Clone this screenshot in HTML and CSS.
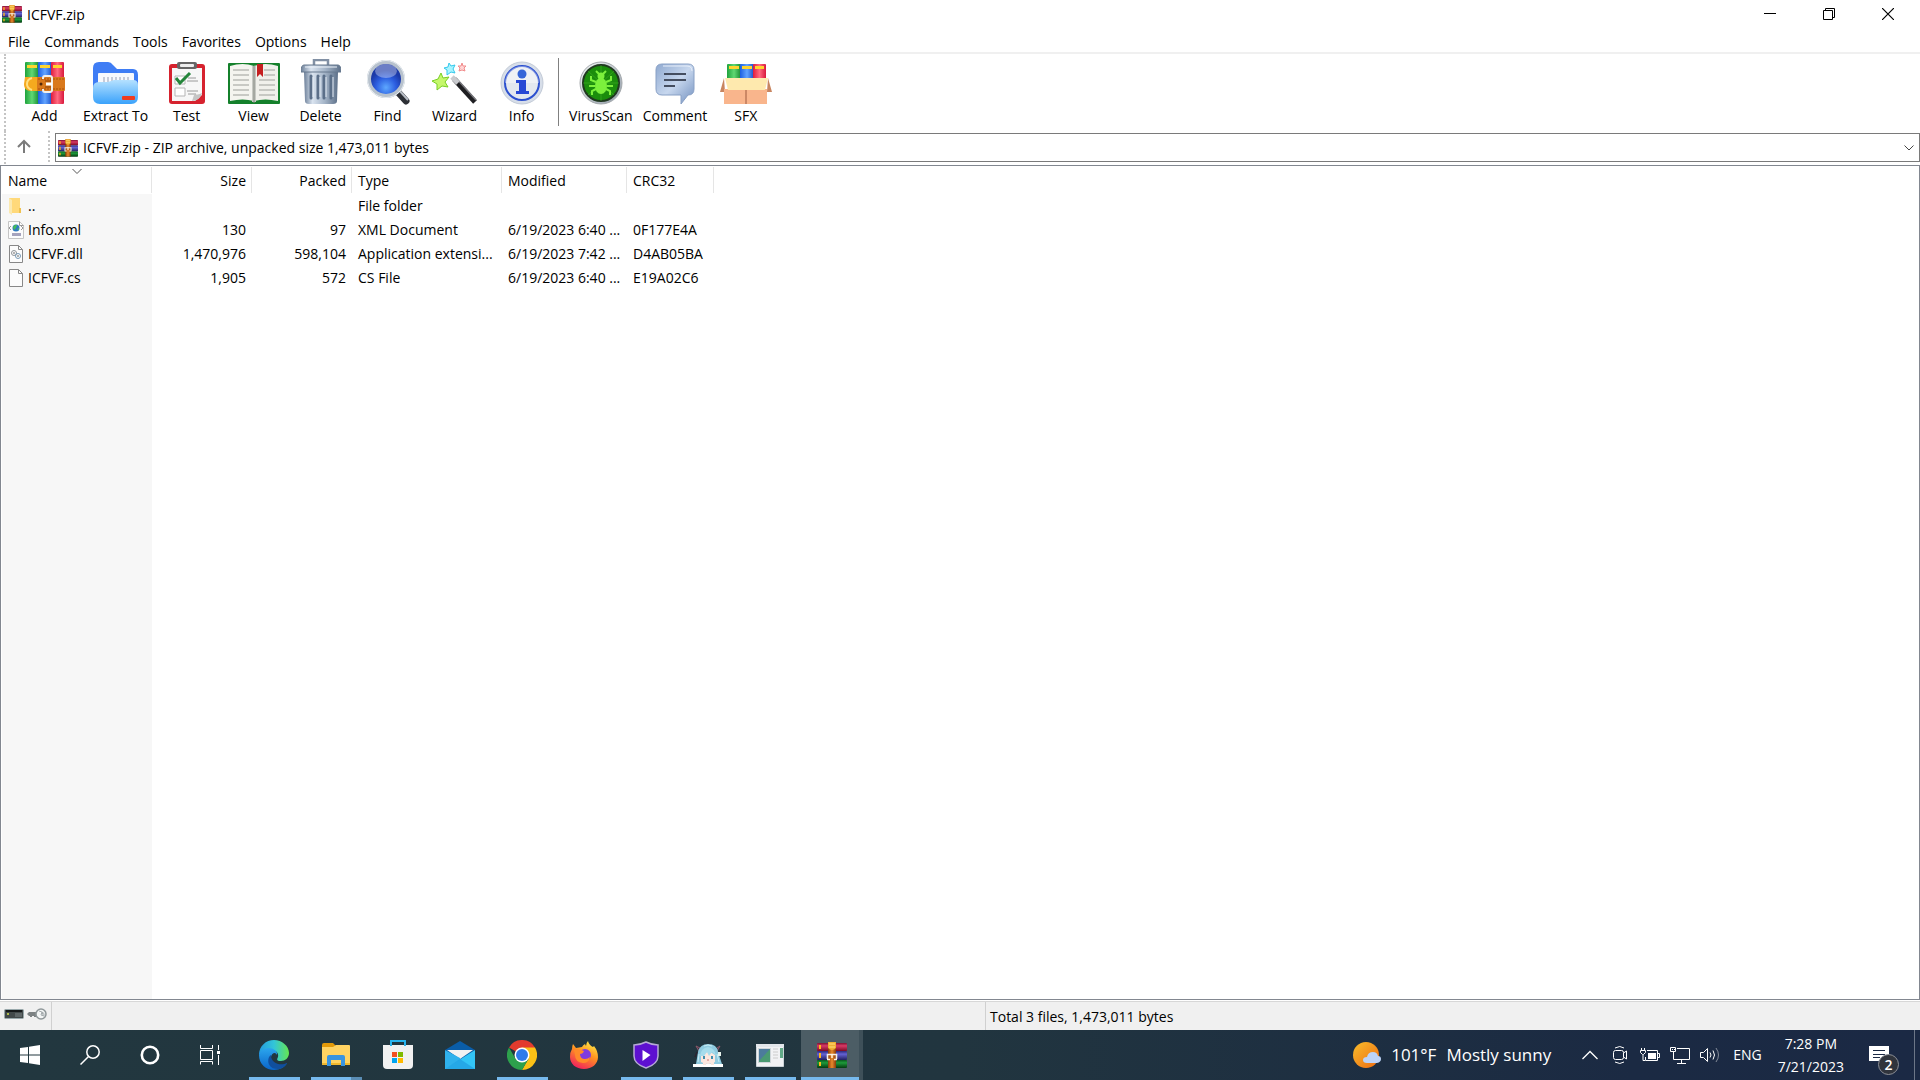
FILE: index.html
```html
<!DOCTYPE html>
<html lang="en">
<head>
    <meta charset="UTF-8">
    <meta name="viewport" content="width=device-width, initial-scale=1.0">
    <title>ICFVF.zip</title>
    <link rel="stylesheet" href="styles.css">
</head>
<body>
    <!-- Shared gradients and the archive icon -->
    <svg class="defs" aria-hidden="true">
        <defs>
            <linearGradient id="gRed" x2="0" y2="1"><stop offset="0" stop-color="#7e1232"/><stop offset=".35" stop-color="#d83a66"/><stop offset="1" stop-color="#7d0a25"/></linearGradient>
            <linearGradient id="gBlue" x2="0" y2="1"><stop offset="0" stop-color="#2b2a7c"/><stop offset=".35" stop-color="#6462d4"/><stop offset="1" stop-color="#211f60"/></linearGradient>
            <linearGradient id="gGreen" x2="0" y2="1"><stop offset="0" stop-color="#0a5a20"/><stop offset=".35" stop-color="#1e9a3a"/><stop offset="1" stop-color="#053a12"/></linearGradient>
            <linearGradient id="gStrap"><stop offset="0" stop-color="#8a3c08"/><stop offset=".5" stop-color="#e88a2c"/><stop offset="1" stop-color="#8a3a0a"/></linearGradient>
            <linearGradient id="vGreen"><stop offset="0" stop-color="#1fa23c"/><stop offset=".5" stop-color="#5fd873"/><stop offset="1" stop-color="#188a32"/></linearGradient>
            <linearGradient id="vBlue"><stop offset="0" stop-color="#1c5fe0"/><stop offset=".5" stop-color="#62a4ff"/><stop offset="1" stop-color="#1a50c8"/></linearGradient>
            <linearGradient id="vRed"><stop offset="0" stop-color="#e01c3c"/><stop offset=".5" stop-color="#ff6a80"/><stop offset="1" stop-color="#d8183c"/></linearGradient>
            <linearGradient id="gSilver" x2="1" y2="1"><stop offset="0" stop-color="#f4f6f8"/><stop offset="1" stop-color="#8f9aa6"/></linearGradient>
        </defs>
        <symbol id="rar" viewBox="0 0 30 26">
            <rect x="0" y="1" width="30" height="8" rx="1" fill="url(#gRed)"/>
            <rect x="0" y="9" width="30" height="9" rx="1" fill="url(#gBlue)"/>
            <rect x="0" y="18" width="30" height="8" rx="1" fill="url(#gGreen)"/>
            <path d="M2 3h2v4H2zM2 11h2v5H2zM2 20h2v4H2z" fill="#ffb81c"/>
            <rect x="11" y="0" width="8" height="26" fill="url(#gStrap)"/>
            <path d="M11 0h8v6q-4 4-8 0z" fill="#f0ae32"/>
            <path d="M12 2h6M12 5h6" stroke="#ffe07a"/>
            <path d="M10.500 17v-4.500h9V17" fill="none" stroke="#f4eee6" stroke-width="1.600"/>
            <path d="M10 17.500h3M17 17.500h3M15 12v4" stroke="#fff3e0" stroke-width="1.500"/>
        </symbol>
    </svg>

    <header class="titlebar">
        <svg class="app-icon"><use href="#rar"/></svg>
        <h1>ICFVF.zip</h1>
        <div class="window-buttons">
            <button aria-label="Minimize"><svg width="12" height="12"><path d="M0 5.500h12" stroke="#000"/></svg></button>
            <button aria-label="Restore"><svg width="12" height="12" fill="none" stroke="#000"><path d="M.5 2.500h9v9h-9zM2.500 2.500v-2h9v9h-2"/></svg></button>
            <button aria-label="Close"><svg width="12" height="12"><path d="M0 0l12 12M12 0L0 12" stroke="#000" stroke-width="1.200"/></svg></button>
        </div>
    </header>

    <nav class="menubar">
        <button>File</button>
        <button>Commands</button>
        <button>Tools</button>
        <button>Favorites</button>
        <button>Options</button>
        <button>Help</button>
    </nav>

    <div class="toolbar">
        <button class="tool">
            <svg width="42" height="44" viewBox="0 0 42 44">
                <rect x="1" y="1" width="14" height="42" rx="1" fill="url(#vGreen)"/>
                <rect x="14" y="1" width="14" height="42" rx="1" fill="url(#vBlue)"/>
                <rect x="27" y="1" width="13" height="42" rx="1" fill="url(#vRed)"/>
                <path d="M3 5.500h10M16 5.500h10M29 5.500h9" stroke="#ffd52e" stroke-width="3"/>
                <rect x="8" y="16" width="33" height="14" rx="1" fill="#d9791c"/>
                <path d="M8 18h32M8 28h32" stroke="#a9500a" stroke-dasharray="2 1"/>
                <path d="M1 16h12v14H7c-5 0-7-3-7-7z" fill="#f5a91f"/>
                <path d="M8 17c-4 1-5 3-5 6s2 5 5 6" fill="none" stroke="#ffdf82" stroke-width="2"/>
                <circle cx="17" cy="23" r="1.500" fill="#53280a"/>
                <path d="M19 18v-1q0-2 2-2h5q2 0 2 2v12q0 2-2 2h-5q-2 0-2-2v-1" fill="none" stroke="#f2eee9" stroke-width="2"/>
                <path d="M21 20h6M21 26h6" stroke="#8a4208"/>
                <path d="M22 23h6" stroke="#fff" stroke-width="3"/>
            </svg>
            <span>Add</span>
        </button>
        <button class="tool">
            <svg width="46" height="44" viewBox="0 0 46 44">
                <defs><linearGradient id="fold" x2="0" y2="1"><stop offset="0" stop-color="#b5e1ff"/><stop offset="1" stop-color="#3aa2fb"/></linearGradient></defs>
                <path d="M0 7q0-6 6-6h9q3 0 5 3l4 4h16q5 0 5 6v16H0z" fill="#3f7df5"/>
                <rect x="5" y="12" width="36" height="18" rx="1" fill="#f8f9fd"/>
                <path d="M11 16v5M15 16v5M19 16v5M23 16v5M27 16v5M31 16v5M35 16v5" stroke="#b6bccb" stroke-width="1.500"/>
                <path d="M0 27q0-6 6-6h9q3-1 6-2h19q5 0 5 5v12q0 7-7 7H7q-7 0-7-7z" fill="url(#fold)"/>
                <rect x="29" y="35" width="13" height="4" rx="1" fill="#ee3c20"/>
            </svg>
            <span>Extract To</span>
        </button>
        <button class="tool">
            <svg width="36" height="44" viewBox="0 0 36 44">
                <rect x="0" y="3" width="36" height="40" rx="3" fill="#d6222e"/>
                <path d="M3 7h30v27l-7 6H3z" fill="#f7f7f7"/>
                <path d="M33 32c-3 2-6 1-8 2l-2 6c5 0 9-3 10-8z" fill="#c5c5c5"/>
                <rect x="8" y="1" width="20" height="7" rx="2" fill="#666"/>
                <rect x="11" y="3" width="14" height="3" rx="1" fill="#eee"/>
                <path d="M6 15h10v8H6zM6 27h10v8H6z" fill="#fff" stroke="#b5b5b5"/>
                <path d="M7 17l4 5 10-10" fill="none" stroke="#24853a" stroke-width="3"/>
                <path d="M18 20h11M19 17h8M18 30h11M19 33h8" stroke="#9a9a9a"/>
            </svg>
            <span>Test</span>
        </button>
        <button class="tool">
            <svg width="52" height="44" viewBox="0 0 52 44">
                <rect x="0" y="2" width="52" height="41" rx="1" fill="#14802b"/>
                <path d="M2 5q13-4 24 0v35q-11-3-24 0z" fill="#f4f4ef"/>
                <path d="M26 5q11-4 24 0v35q-13-3-24 0z" fill="#f0f0eb"/>
                <path d="M24 5h4v36h-4z" fill="#c7c9c4"/>
                <path d="M26 5v37" stroke="#82867e"/>
                <path d="M5 9h16M5 14h16M5 19h16M5 24h16M5 29h16M5 34h16M36 9h11M36 14h11M31 19h16M31 24h16M31 29h16M31 34h16" stroke="#b9bbb7" stroke-width="1.500"/>
                <path d="M29 3h6v13l-3-3-3 3z" fill="#c51f20"/>
            </svg>
            <span>View</span>
        </button>
        <button class="tool">
            <svg width="40" height="46" viewBox="0 0 40 46">
                <defs><linearGradient id="bin"><stop offset="0" stop-color="#6d8099"/><stop offset=".25" stop-color="#d9e3ef"/><stop offset=".6" stop-color="#a6b6c9"/><stop offset="1" stop-color="#5d7089"/></linearGradient></defs>
                <path d="M13 6V1h14v5" fill="none" stroke="#8190a4" stroke-width="2.500"/>
                <path d="M3 13h34l-1 29q0 3-4 3H8q-4 0-4-3z" fill="url(#bin)"/>
                <path d="M10 17v22M17 17v22M23 17v22M30 17v22" stroke="#5b6f89" stroke-width="3" stroke-linecap="round"/>
                <path d="M12 18v20M19 18v20M25 18v20M32 18v20" stroke="#e3ebf4"/>
                <path d="M3 6h34q3 0 3 7H0q0-7 3-7z" fill="url(#bin)" stroke="#66788e"/>
                <path d="M4 8h32" stroke="#edf3fa"/>
            </svg>
            <span>Delete</span>
        </button>
        <button class="tool">
            <svg width="44" height="46" viewBox="0 0 44 46">
                <defs><radialGradient id="lens" cy=".75"><stop offset="0" stop-color="#5ea8ff"/><stop offset=".6" stop-color="#2b5cdf"/><stop offset="1" stop-color="#1c3aa8"/></radialGradient></defs>
                <path d="M31 32l9 10" stroke="#2d3036" stroke-width="7" stroke-linecap="round"/>
                <path d="M32 30l10 11" stroke="#b8bdc5" stroke-width="2"/>
                <circle cx="20" cy="20" r="17" fill="url(#lens)" stroke="#b8c2cd" stroke-width="4"/>
                <circle cx="20" cy="20" r="18.500" fill="none" stroke="#e8edf1"/>
                <ellipse cx="20" cy="12" rx="11" ry="7" fill="#fff" opacity=".35"/>
            </svg>
            <span>Find</span>
        </button>
        <button class="tool">
            <svg width="46" height="44" viewBox="0 0 46 44">
                <path d="M22 18l21 23" stroke="#1f1f22" stroke-width="5"/>
                <path d="M24 17l20 22" stroke="#77777c" stroke-width="1.500"/>
                <path d="M20 16l6 6" stroke="#c9cace" stroke-width="5"/>
                <path d="M9 12l2 5 6-1-4 5 3 5-6-1-5 4v-6l-5-3 6-2z" fill="#c5f76b" stroke="#79cf25"/>
                <path d="M17 2l2 3 4-1-2 4 2 4-4-1-4 3v-5l-3-2 4-1z" fill="#a9f4ff" stroke="#33c8ec"/>
                <path d="M30 2l1 3h3l-2 2 1 3-3-1-3 1 1-3-2-2h3z" fill="#ffd5d5" stroke="#f18c8c"/>
            </svg>
            <span>Wizard</span>
        </button>
        <button class="tool">
            <svg width="44" height="44" viewBox="0 0 44 44">
                <circle cx="22" cy="22" r="21" fill="#d7dee9" stroke="#c3cbd7"/>
                <circle cx="22" cy="22" r="17" fill="#e3e8ef" stroke="#2c50cf" stroke-width="2"/>
                <path d="M5 22a17 17 0 0 1 34 0z" fill="#fff" opacity=".4"/>
                <circle cx="22" cy="13" r="4.500" fill="#3565d8"/>
                <path d="M16 19h10v11h3v3H16v-3h3v-8h-3z" fill="#2748d5"/>
            </svg>
            <span>Info</span>
        </button>
        <div class="toolbar-separator"></div>
        <button class="tool">
            <svg width="44" height="44" viewBox="0 0 44 44">
                <circle cx="22" cy="22" r="21" fill="url(#gSilver)" stroke="#a4a9ac"/>
                <circle cx="22" cy="22" r="18" fill="#1b8d0c" stroke="#203a20" stroke-width="2"/>
                <path d="M22 4v36M4 22h36M9 10l26 24M9 34l26-24" stroke="#49b52d" opacity=".5"/>
                <ellipse cx="22" cy="25" rx="6" ry="8" fill="#7cf03c"/>
                <circle cx="22" cy="15" r="3.500" fill="#7cf03c"/>
                <path d="M17 21l-5-2v-4M27 21l5-2v-4M16 25h-6M28 25h6M17 28l-4 2v4M27 28l4 2v4M20 13l-3-3M24 13l3-3" fill="none" stroke="#7cf03c" stroke-width="2"/>
            </svg>
            <span>VirusScan</span>
        </button>
        <button class="tool">
            <svg width="40" height="42" viewBox="0 0 40 42">
                <defs><linearGradient id="talk" x2="1" y2="1"><stop offset="0" stop-color="#8fa9d0"/><stop offset=".5" stop-color="#c7d7ee"/><stop offset="1" stop-color="#7290bf"/></linearGradient></defs>
                <path d="M7 1h26q6 0 6 6v19q0 6-6 6l-7 9v-9H7q-6 0-6-6V7q0-6 6-6z" fill="url(#talk)" stroke="#88a0c5"/>
                <path d="M8 3h24q5 0 5 5" fill="none" stroke="#e8effa"/>
                <path d="M9 11h22M9 17h22M9 23h11" stroke="#454e60" stroke-width="2"/>
            </svg>
            <span>Comment</span>
        </button>
        <button class="tool">
            <svg width="52" height="42" viewBox="0 0 52 42">
                <rect x="7" y="1" width="14" height="18" rx="1" fill="url(#vGreen)"/>
                <rect x="20" y="1" width="14" height="18" rx="1" fill="url(#vBlue)"/>
                <rect x="33" y="1" width="13" height="18" rx="1" fill="url(#vRed)"/>
                <path d="M9 4.500h10M22 4.500h10M35 4.500h9" stroke="#ffd52e" stroke-width="3"/>
                <path d="M4 15l-4 14h5zM48 15l4 14h-5z" fill="#c88560"/>
                <path d="M4 26h43v15H4z" fill="#f9b58c"/>
                <path d="M5 15h43l-3 12H8z" fill="#fee9ae"/>
                <path d="M26 27v14" stroke="#9f5b3e"/>
            </svg>
            <span>SFX</span>
        </button>
    </div>

    <div class="address-row">
        <button class="up" aria-label="Up one level">
            <svg width="14" height="15" fill="none" stroke="#7b7b7b" stroke-width="2"><path d="M7 14V2M1 8l6-6 6 6"/></svg>
        </button>
        <div class="address">
            <svg class="app-icon"><use href="#rar"/></svg>
            <select aria-label="Archive path">
                <option>ICFVF.zip - ZIP archive, unpacked size 1,473,011 bytes</option>
            </select>
            <svg class="chevron" width="10" height="6" fill="none" stroke="#444"><path d="M.5.500L5 5 9.500.500"/></svg>
        </div>
    </div>

    <main class="file-list">
        <table>
            <colgroup>
                <col class="col-name">
                <col class="col-size">
                <col class="col-size">
                <col class="col-type">
                <col class="col-modified">
                <col class="col-crc">
            </colgroup>
            <thead>
                <tr>
                    <th>Name<svg class="sort-mark" width="10" height="5" fill="none" stroke="#555"><path d="M.5 0L5 4.500 9.500 0"/></svg></th>
                    <th class="number">Size</th>
                    <th class="number">Packed</th>
                    <th>Type</th>
                    <th>Modified</th>
                    <th>CRC32</th>
                </tr>
            </thead>
            <tbody>
                <tr>
                    <td>
                        <div class="file-name">
                            <svg width="16" height="18"><path d="M1 1h11v15H1z" fill="#ffd97a"/><path d="M1 1l3 2v15l-3-2z" fill="#fbe9b0"/><path d="M11 11h2v5h-2z" fill="#f0c250"/></svg>
                            <span>..</span>
                        </div>
                    </td>
                    <td></td>
                    <td></td>
                    <td>File folder</td>
                    <td></td>
                    <td></td>
                </tr>
                <tr>
                    <td>
                        <div class="file-name">
                            <svg width="16" height="18"><path d="M.5.500h11l4 4v13H.5z" fill="#fcfcfc" stroke="#c5c5c5"/><path d="M11.500.500v4h4" fill="none" stroke="#999"/><circle cx="8" cy="7" r="3.500" fill="#2f7bc0"/><path d="M5 6q2-3 4-2l-1 3-2 2zM9 8l2-1v2z" fill="#45bd57"/><path d="M3 5L1 7l2 2M13 5l2 2-2 2" fill="none" stroke="#999"/><path d="M4 13.500h9" stroke="#a5a3bd" stroke-width="3"/></svg>
                            <span>Info.xml</span>
                        </div>
                    </td>
                    <td class="number">130</td>
                    <td class="number">97</td>
                    <td>XML Document</td>
                    <td>6/19/2023 6:40 ...</td>
                    <td>0F177E4A</td>
                </tr>
                <tr>
                    <td>
                        <div class="file-name">
                            <svg width="16" height="18"><path d="M1.500.500h9l4 4v13h-13z" fill="#fcfcfc" stroke="#888"/><path d="M10.500.500v4h4" fill="none" stroke="#888"/><circle cx="6" cy="8" r="2.500" fill="none" stroke="#8f9498"/><circle cx="6" cy="8" r="1" fill="#999"/><circle cx="10" cy="11" r="2.500" fill="none" stroke="#7a9cb8"/><circle cx="10" cy="11" r="1" fill="#999"/></svg>
                            <span>ICFVF.dll</span>
                        </div>
                    </td>
                    <td class="number">1,470,976</td>
                    <td class="number">598,104</td>
                    <td>Application extensi...</td>
                    <td>6/19/2023 7:42 ...</td>
                    <td>D4AB05BA</td>
                </tr>
                <tr>
                    <td>
                        <div class="file-name">
                            <svg width="16" height="18"><path d="M1.500.500h9l4 4v13h-13z" fill="#fcfcfc" stroke="#888"/><path d="M10.500.500v4h4" fill="none" stroke="#888"/></svg>
                            <span>ICFVF.cs</span>
                        </div>
                    </td>
                    <td class="number">1,905</td>
                    <td class="number">572</td>
                    <td>CS File</td>
                    <td>6/19/2023 6:40 ...</td>
                    <td>E19A02C6</td>
                </tr>
            </tbody>
        </table>
    </main>

    <footer class="statusbar">
        <div class="status-icons">
            <svg width="20" height="12"><rect x=".5" y="1.500" width="19" height="9" rx="1" fill="#42494a" stroke="#98a8ab"/><path d="M2 3h16" stroke="#15191a" stroke-width="2"/><path d="M11 5h7v4h-7z" fill="#5e6667"/><circle cx="4" cy="6" r="1" fill="#d6e54d"/></svg>
            <svg width="20" height="12"><path d="M0 6l2-2h10v4H9v1H7V8H5v1H3V8H2z" fill="#7d8283"/><circle cx="14" cy="6" r="5" fill="#f3f5f5" stroke="#8e9698" stroke-width="1.500"/><path d="M12 3q4 0 4 4M15 4q3 1 2 4l-3-1z" fill="#fff" stroke="#a4abad"/></svg>
        </div>
        <div class="status-selected"></div>
        <div class="status-total">Total 3 files, 1,473,011 bytes</div>
    </footer>

    <div class="taskbar">
        <div class="system-buttons">
            <button aria-label="Start"><svg width="20" height="20" fill="#fff"><path d="M0 3l8-1v7.500H0zM9 1.800L20 0v9.500H9zM0 10.500h8V18l-8-1zM9 10.500h11V20L9 18.300z"/></svg></button>
            <button aria-label="Search"><svg width="20" height="20" fill="none" stroke="#fff" stroke-width="1.500"><circle cx="13" cy="7" r="6.200"/><path d="M8.500 11.500L.5 19.500"/></svg></button>
            <button aria-label="Cortana"><svg width="20" height="20" fill="none" stroke="#fff" stroke-width="2.600"><circle cx="10" cy="10" r="8.200"/></svg></button>
            <button aria-label="Task View"><svg width="20" height="20" fill="none" stroke="#fff"><path d="M.5 0v3.500h12V0M.5 5.500h12v9H.5zM.5 19.500v-3h12v3M18.500 0v5M18.500 10v10"/><path d="M17 6h3v3h-3z" fill="#fff" stroke="none"/></svg></button>
        </div>
        <div class="task-apps">
            <button class="open" aria-label="Microsoft Edge">
                <svg width="30" height="30" viewBox="0 0 30 30">
                    <defs>
                        <linearGradient id="edgeTop"><stop offset="0" stop-color="#249be0"/><stop offset=".5" stop-color="#32c5d8"/><stop offset="1" stop-color="#65e650"/></linearGradient>
                        <linearGradient id="edgeSide" x2="0" y2="1"><stop offset="0" stop-color="#2ba6ee"/><stop offset="1" stop-color="#0a64c8"/></linearGradient>
                    </defs>
                    <path d="M0 15C0 6 7 0 15 0s15 6 15 13c0 5-4 8-8 8-5 0-4-2-3-4 1-4-2-7-7-7C6 10 2 12 0 15z" fill="url(#edgeTop)"/>
                    <path d="M0 15c1-5 6-7 10-7s9 3 8 7c-1-3-5-3-6 2-1 6 5 9 9 9 3 0 5-1 7-3-2 4-7 7-13 7C7 30 0 24 0 15z" fill="url(#edgeSide)"/>
                    <path d="M12 15c-4 2-5 14 7 14 3 0 7-2 9-6-6 3-16 1-16-8z" fill="#104f9e"/>
                </svg>
            </button>
            <button class="open grouped" aria-label="File Explorer">
                <svg width="28" height="24" viewBox="0 0 28 24"><path d="M0 2q0-2 2-2h9l3 3-2 3H0z" fill="#e39a09"/><path d="M0 4h11l3-2h13q1 0 1 1v19H0z" fill="#ffd362"/><path d="M0 20h28v2H0z" fill="#f0b72d"/><path d="M5 23V14q0-2 2-2h14q2 0 2 2v9h-4v-6H9v6z" fill="#3994e0"/></svg>
            </button>
            <button aria-label="Microsoft Store">
                <svg width="30" height="30" viewBox="0 0 30 30"><path d="M0 5h30v20q0 4-4 4H4q-4 0-4-4z" fill="#f1f1f1"/><path d="M8 6V1h14v5" fill="none" stroke="#28b4ee" stroke-width="2"/><path d="M9 12h5v5H9z" fill="#f25022"/><path d="M15 12h5v5h-5z" fill="#7fba00"/><path d="M9 18h5v5H9z" fill="#00a4ef"/><path d="M15 18h5v5h-5z" fill="#ffb900"/></svg>
            </button>
            <button aria-label="Mail">
                <svg width="30" height="28" viewBox="0 0 30 28"><path d="M0 9L15 0l15 9-15 11z" fill="#0a5da8"/><path d="M2 9h26L15 18z" fill="#f2f2f2"/><path d="M0 9l15 8v11H0z" fill="#2fb1ec"/><path d="M30 9L0 28h30z" fill="#33c5f6"/><path d="M0 28l15-10 15 10z" fill="#1d95dd" opacity=".6"/></svg>
            </button>
            <button class="open" aria-label="Google Chrome">
                <svg width="30" height="30" viewBox="0 0 30 30"><path d="M15 15L2 7.500A15 15 0 0 1 28 7.500z" fill="#e33b2e"/><path d="M15 7.500h13A15 15 0 0 1 15 30l6.500-11.300z" fill="#fbc116"/><path d="M2 7.500l6.500 11.200 13 0L15 30A15 15 0 0 1 2 7.500z" fill="#2da14c"/><circle cx="15" cy="15" r="7.500" fill="#fff"/><circle cx="15" cy="15" r="6" fill="#2f7bea"/></svg>
            </button>
            <button aria-label="Firefox">
                <svg width="28" height="28" viewBox="0 0 28 28">
                    <defs><linearGradient id="fox" x1=".8" x2=".3" y2="1"><stop offset="0" stop-color="#fff04a"/><stop offset=".45" stop-color="#ff9320"/><stop offset="1" stop-color="#f0205e"/></linearGradient></defs>
                    <path d="M3 3l3 4 6-1q1-2 3-3l1 2q0-3 2-5 1 4 5 6l1-1q4 5 4 11c0 7-6 12-14 12S0 23 0 16q0-5 2-8 0-3 1-5z" fill="url(#fox)"/>
                    <circle cx="15" cy="14" r="6" fill="#7e3be0"/>
                    <path d="M4 9q5-2 10 1-1 3-4 3 0 5 5 5 3 0 5-2-1 6-7 6-8-1-8-8z" fill="#ff8a2a"/>
                </svg>
            </button>
            <button class="open" aria-label="Video player">
                <svg width="26" height="28" viewBox="0 0 26 28"><path d="M13 1q6 3 12 3v11q0 8-12 12Q1 23 1 15V4q6 0 12-3z" fill="#5d10d0" stroke="#b6a9d6" stroke-width="1.500"/><path d="M9.500 9l8 5-8 6z" fill="#fff"/></svg>
            </button>
            <button class="open" aria-label="Desktop pet">
                <svg width="30" height="26" viewBox="0 0 30 26">
                    <path d="M7 11L3 4l6 3M23 11l4-7-6 4" fill="#3d3145" stroke="#8b5a6a"/>
                    <path d="M3 22Q4 16 5 10 7 2 15 2q9 0 10 8l4 12z" fill="#8fcbe0"/>
                    <path d="M4 10l-2 5M26 9l2 4" stroke="#2b2430" stroke-width="1.500"/>
                    <path d="M8 13q7-6 14 0v7q-7 4-14 0z" fill="#fbe7df"/>
                    <path d="M7 14q1-8 8-9 7 1 8 9l-4-4-3 4-2-4-3 4z" fill="#a5dcec"/>
                    <path d="M11 4q4-2 8 0M6 12l-1 8M24 12l2 8" fill="none" stroke="#c9edf5"/>
                    <path d="M10 14h2v3h-2zM18 14h2v3h-2z" fill="#3f8fae"/>
                    <path d="M25 10h3v4h-3z" fill="#e6f3ec"/>
                    <path d="M0 22h30v3H0z" fill="#fff"/>
                    <path d="M10 20h3v3h-3zM18 20h3v3h-3z" fill="#fbe7df"/>
                    <path d="M14 18h2" stroke="#c77"/>
                </svg>
            </button>
            <button class="open" aria-label="Document viewer">
                <svg width="28" height="24" viewBox="0 0 28 24"><path d="M.5 1.500h27v22H.5z" fill="#f1f2f4" stroke="#cbd3d8"/><path d="M0 1h28v3H0z" fill="#e2e6ea"/><path d="M2 5h13v15H2z" fill="#cfd6da"/><path d="M3 6h11v13H3z" fill="#4a9a72"/><path d="M3 6h11L3 18z" fill="#4c7b9c"/><path d="M17 6h5M17 9h5M17 12h5M17 15h5" stroke="#ccc"/><path d="M24 5h3v10h-3z" fill="#62a987"/></svg>
            </button>
            <button class="open active" aria-label="WinRAR">
                <svg width="30" height="26"><use href="#rar"/></svg>
            </button>
        </div>
        <div class="tray">
            <button class="weather">
                <svg width="28" height="27" viewBox="0 0 28 27">
                    <defs><linearGradient id="sun" x2="1" y2="1"><stop offset="0" stop-color="#f9bd2b"/><stop offset="1" stop-color="#ee6b12"/></linearGradient></defs>
                    <circle cx="13" cy="13" r="13" fill="url(#sun)"/>
                    <path d="M14 21q-4 0-4-3t4-3q1-5 6-5 4 0 5 4 3 0 3 3t-4 4z" fill="#bdd3f7"/>
                </svg>
                <span>101°F</span>
                <span>Mostly sunny</span>
            </button>
            <button class="tray-icon" aria-label="Show hidden icons"><svg width="16" height="10" fill="none" stroke="#fff" stroke-width="1.300"><path d="M.5 9L8 1.500 15.500 9"/></svg></button>
            <button class="tray-icon" aria-label="Meet Now"><svg width="16" height="20" fill="none" stroke="#fff"><path d="M3 3q5-3 9 0M3 17q5 3 9 0M11.500 8l3-2v8l-3-2"/><rect x="1.500" y="5.500" width="10" height="9" rx="2"/></svg></button>
            <button class="tray-icon" aria-label="Battery"><svg width="20" height="14" fill="none" stroke="#fff"><path d="M7 2.500h10.500v10h-12V9M18 5.500h1.500v4H18M1.500 0v2M4.500 0v2M.5 2.500h5v2l-2 2h-1l-2-2zM3 7v5.500h2"/><path d="M8 5h8v6H8z" fill="#fff" stroke="none"/></svg></button>
            <button class="tray-icon" aria-label="Network"><svg width="20" height="17" fill="none" stroke="#fff"><path d="M7 1.500h12.500v11h-16V8M11.500 13v3M7 16.500h9M.5.500h5v4h-5zM3.500 5v3M2.500 2v1M4.500 2v1"/></svg></button>
            <button class="tray-icon" aria-label="Volume"><svg width="20" height="18" fill="none" stroke="#fff"><path d="M.5 6.500h3l4-4v13l-4-4h-3zM10 6.500q2 2.500 0 5M13 4.500q3 4.500 0 9"/><path d="M16 2q5 7 0 14" opacity=".45"/></svg></button>
            <button class="language">ENG</button>
            <button class="clock"><span>7:28 PM</span><span>7/21/2023</span></button>
            <button class="notifications" aria-label="2 new notifications">
                <svg width="20" height="19"><path d="M0 0h20v15h-7l-3 4v-4H0z" fill="#fff"/><path d="M4 4.500h12M4 8.500h12M4 11.500h7" stroke="#1c2a44"/></svg>
                <span class="badge">2</span>
            </button>
            <button class="show-desktop" aria-label="Show desktop"></button>
        </div>
    </div>
</body>
</html>
```

FILE: styles.css
```css
* {
    box-sizing: border-box;
}
body {
    margin: 0;
    height: 100vh;
    display: flex;
    flex-direction: column;
    font-family: "Open Sans", "Noto Sans", sans-serif;
    font-size: 14px;
    line-height: 20px;
    color: #000;
    background-color: #fff;
    overflow: hidden;
}
button {
    padding: 0;
    border: none;
    background: none;
    color: inherit;
    font: inherit;
    white-space: nowrap;
}
svg {
    display: block;
    flex-shrink: 0;
}
.defs {
    position: absolute;
    width: 0;
    height: 0;
}
.app-icon {
    width: 20px;
    height: 18px;
}

/* Title bar and menu */
.titlebar {
    display: flex;
    align-items: center;
    height: 28px;
    padding-left: 2px;
    gap: 5px;
}
.titlebar h1 {
    margin: 0;
    padding-top: 2px;
    flex: 1;
    font-size: 14px;
    font-weight: normal;
}
.window-buttons {
    display: flex;
    padding-right: 3px;
}
.window-buttons button {
    display: flex;
    align-items: center;
    justify-content: center;
    width: 59px;
    height: 28px;
}
.menubar {
    display: flex;
    gap: 14px;
    height: 26px;
    padding: 4px 8px 0;
    align-items: flex-start;
    border-bottom: 2px solid #f0f0f0;
}

/* Toolbar */
.toolbar {
    display: flex;
    height: 77px;
    margin-left: 4px;
    padding: 4px 0 0 5px;
    border-left: 2px dotted #c4c4c4;
}
.tool {
    display: flex;
    flex-direction: column;
    align-items: center;
    justify-content: flex-end;
    min-width: 67px;
    height: 68px;
    padding: 0 5px;
    gap: 1px;
}
.toolbar-separator {
    width: 1px;
    height: 68px;
    margin: 0 5px 0 3px;
    background-color: #808080;
}

/* Address bar */
.address-row {
    display: flex;
    height: 33px;
    margin-left: 4px;
    border-left: 2px dotted #c4c4c4;
    padding-bottom: 2px;
}
.up {
    display: flex;
    align-items: center;
    justify-content: center;
    width: 44px;
    padding-right: 6px;
    border-right: 2px dotted #c4c4c4;
}
.address {
    flex: 1;
    display: flex;
    align-items: center;
    height: 29px;
    margin: 2px 0 0 5px;
    padding: 0 5px 0 2px;
    gap: 5px;
    border: 1px solid #7a7a7a;
}
.address select {
    flex: 1;
    min-width: 0;
    padding: 0;
    border: none;
    background: none;
    appearance: none;
    color: inherit;
    font: inherit;
}
.chevron {
    pointer-events: none;
}

/* File list */
.file-list {
    flex: 1;
    min-height: 0;
    margin-top: 1px;
    border: 1px solid #828790;
    background: linear-gradient(#f7f7f7, #f7f7f7) no-repeat 1px 0 / 150px 100%;
}
.file-list table {
    width: 100%;
    table-layout: fixed;
    border-collapse: collapse;
}
.col-name {
    width: 151px;
}
.col-size {
    width: 100px;
}
.col-type {
    width: 150px;
}
.col-modified {
    width: 125px;
}
.col-crc {
    width: auto;
}
.file-list th,
.file-list td {
    height: 24px;
    padding: 0 0 0 6px;
    text-align: left;
    font-weight: normal;
    white-space: nowrap;
}
.file-list th {
    position: relative;
    height: 28px;
    padding-top: 2px;
    background: linear-gradient(#e5e5e5, #e5e5e5) no-repeat right 0 top 1px / 1px 26px #fff;
}
.file-list th:first-child {
    padding-left: 7px;
}
.file-list th:last-child {
    background-position: 86px 1px;
}
.file-list .number {
    padding-right: 6px;
    text-align: right;
}
.sort-mark {
    position: absolute;
    top: 3px;
    left: 71px;
}
.file-name {
    display: flex;
    align-items: center;
    gap: 4px;
    padding-left: 1px;
}

/* Status bar */
.statusbar {
    display: grid;
    grid-template-columns: 52px 1fr 1fr;
    height: 29px;
    margin-top: 1px;
    background-color: #f0f0f0;
    border-top: 1px solid #d7d7d7;
}
.status-icons {
    display: flex;
    padding: 6px 4px;
    gap: 3px;
}
.status-icons,
.status-selected {
    border-right: 1px solid #d0d0d0;
}
.status-total {
    padding: 5px 4px;
}

/* Taskbar */
.taskbar {
    display: flex;
    height: 50px;
    color: #fff;
    background: linear-gradient(90deg, #22373f 0%, #21353f 50%, #1b2a43 85%, #1b2944 100%);
}
.system-buttons,
.task-apps,
.tray {
    display: flex;
}
.system-buttons button {
    display: flex;
    align-items: center;
    justify-content: center;
    width: 60px;
}
.task-apps {
    margin-left: 3px;
}
.task-apps button {
    display: flex;
    align-items: center;
    justify-content: center;
    width: 62px;
    background: no-repeat center bottom / 51px 3px;
}
.task-apps .open {
    background-image: linear-gradient(#76b9ed, #76b9ed);
}
.task-apps .grouped {
    background-image: linear-gradient(90deg, #76b9ed 40px, #5a8db4 40px);
}
.task-apps .active {
    background-color: #4c5d65;
    background-size: 100% 3px;
    box-shadow: inset -4px 0 #3e5059;
}
.tray {
    margin-left: auto;
    align-items: stretch;
}
.tray button {
    display: flex;
    align-items: center;
}
.weather {
    gap: 10px;
    margin-right: 24px;
    font-size: 17px;
}
.tray-icon {
    justify-content: center;
    width: 30px;
}
.language {
    padding: 0 16px 0 8px;
}
.tray .clock {
    flex-direction: column;
    justify-content: center;
    gap: 3px;
}
.notifications {
    position: relative;
    margin: 0 25px;
}
.badge {
    position: absolute;
    top: 24px;
    left: 9px;
    width: 21px;
    height: 21px;
    border: 1px solid #8c8f96;
    border-radius: 50%;
    background-color: #30343c;
    font-weight: 600;
    line-height: 19px;
    text-align: center;
}
.show-desktop {
    width: 6px;
    border-left: 1px solid #6c7687;
}
```
